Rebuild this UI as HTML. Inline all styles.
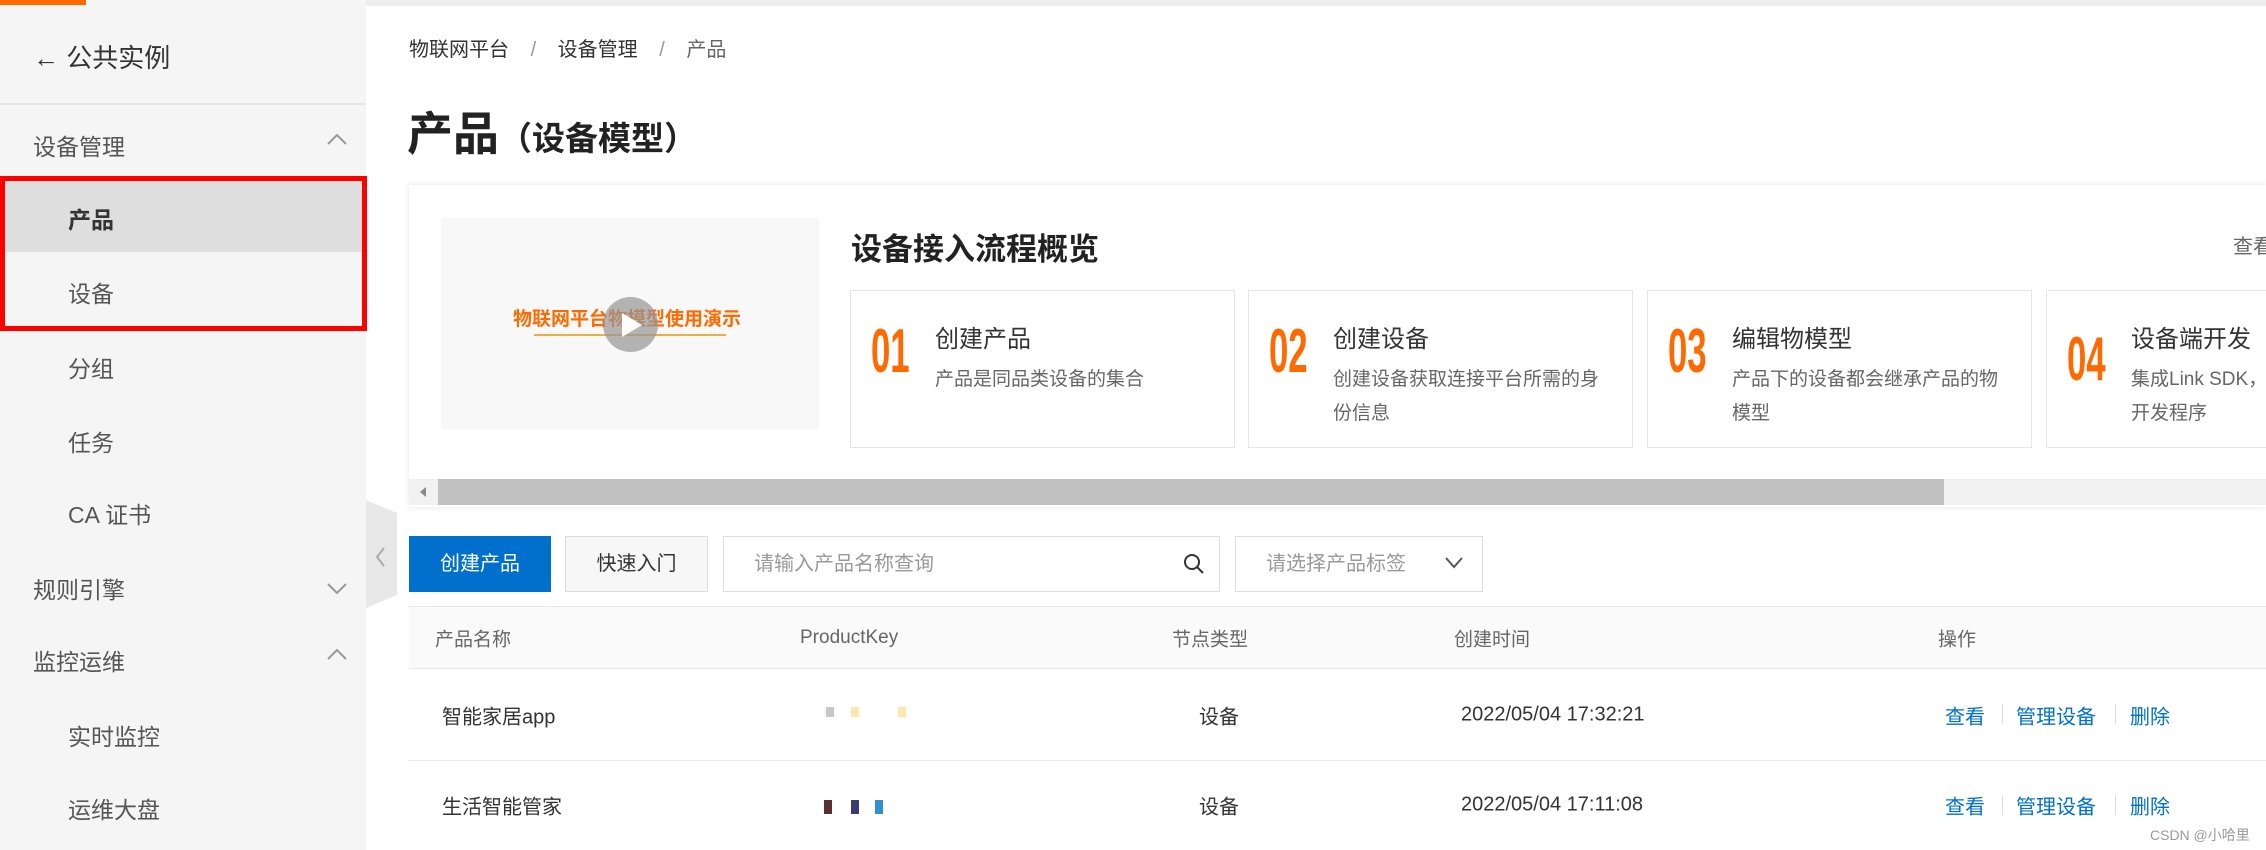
<!DOCTYPE html>
<html><head><meta charset="utf-8"><style>
*{margin:0;padding:0;box-sizing:border-box}
body{width:2266px;height:850px;overflow:hidden;background:#fff;font-family:"Liberation Sans","Noto Sans CJK SC",sans-serif;color:#333;position:relative}
.a{position:absolute;white-space:nowrap}
.sb{position:absolute;left:0;top:0;width:366px;height:850px;background:#f5f5f5}
.mi{position:absolute;font-size:23px;color:#555;transform:translateY(-50%)}
.sub{left:68px}
.top{left:33px}
.num{position:absolute;color:#ff6a00;font-size:62px;font-weight:bold;transform:scaleX(.56);transform-origin:left top;line-height:1}
.step{position:absolute;top:290px;width:385px;height:158px;border:1px solid #e6e6e6;background:#fff}
.st{position:absolute;left:84px;top:28px;font-size:24px;color:#333}
.sd{position:absolute;left:84px;top:72px;font-size:19px;color:#666;line-height:34px;white-space:normal;width:275px}
.th{position:absolute;font-size:19px;color:#666;top:638px;transform:translateY(-50%)}
.td{position:absolute;font-size:20px;color:#333;transform:translateY(-50%)}
.lk{position:absolute;font-size:20px;color:#0070cc;transform:translateY(-50%)}
</style></head><body>
<div class="a" style="left:0;top:0;width:2266px;height:6px;background:#eee"></div>
<div class="sb"></div>
<div class="a" style="left:0;top:0;width:86px;height:5px;background:#ff6a00"></div>
<div class="a" style="left:33px;top:38px;font-size:26px;color:#333"><b>←</b> 公共实例</div>
<div class="a" style="left:0;top:103px;width:366px;height:2px;background:#e4e4e4"></div>
<div class="mi top" style="top:145px">设备管理</div>
<svg class="a" style="left:326px;top:132px" width="22" height="14"><path d="M2 12 L11 3 L20 12" fill="none" stroke="#999" stroke-width="2"/></svg>
<div class="a" style="left:0;top:176px;width:367px;height:155px;border:5px solid #f00;background:#f5f5f5"></div>
<div class="a" style="left:5px;top:181px;width:357px;height:71px;background:#dedede"></div>
<div class="mi sub" style="top:218px;font-weight:bold;color:#333">产品</div>
<div class="mi sub" style="top:292px">设备</div>
<div class="mi sub" style="top:367px">分组</div>
<div class="mi sub" style="top:441px">任务</div>
<div class="mi sub" style="top:513px">CA 证书</div>
<div class="mi top" style="top:588px">规则引擎</div>
<svg class="a" style="left:326px;top:581px" width="22" height="14"><path d="M2 3 L11 12 L20 3" fill="none" stroke="#999" stroke-width="2"/></svg>
<div class="mi top" style="top:660px">监控运维</div>
<svg class="a" style="left:326px;top:647px" width="22" height="14"><path d="M2 12 L11 3 L20 12" fill="none" stroke="#999" stroke-width="2"/></svg>
<div class="mi sub" style="top:735px">实时监控</div>
<div class="mi sub" style="top:808px">运维大盘</div>
<svg class="a" style="left:366px;top:500px" width="32" height="110"><path d="M0 0 L31 13 L31 95 L0 108Z" fill="#e8e8e8"/><path d="M18 48 L11 57 L18 66" fill="none" stroke="#aaa" stroke-width="2"/></svg>

<div class="a" style="left:409px;top:33px;font-size:20px;color:#333">物联网平台 <span style="color:#999;margin:0 16px">/</span> 设备管理 <span style="color:#999;margin:0 16px">/</span> <span style="color:#666">产品</span></div>
<div class="a" style="left:407px;top:98px;font-size:46px;font-weight:bold;color:#222">产品<span style="font-size:33px">（设备模型）</span></div>

<div class="a" style="left:409px;top:185px;width:1857px;height:322px;background:#fff;box-shadow:0 0 6px rgba(0,0,0,.1)"></div>
<div class="a" style="left:441px;top:218px;width:378px;height:211px;background:#f8f8f8"></div>
<div class="a" style="left:513px;top:304px;font-size:19px;font-weight:bold;color:#ff6a00">物联网平台物模型使用演示</div>
<div class="a" style="left:534px;top:334px;width:192px;height:2px;background:#e8b040"></div>
<div class="a" style="left:603px;top:297px;width:55px;height:55px;border-radius:50%;background:rgba(150,150,150,.7)"></div>
<svg class="a" style="left:620px;top:311px" width="24" height="28"><path d="M2 2 L22 14 L2 26Z" fill="#fff"/></svg>
<div class="a" style="left:851px;top:224px;font-size:31px;font-weight:bold;color:#222">设备接入流程概览</div>
<div class="a" style="left:2233px;top:230px;font-size:20px;color:#666">查看</div>

<div class="step" style="left:850px"><div class="num" style="left:20px;top:30px">01</div><div class="st">创建产品</div><div class="sd">产品是同品类设备的集合</div></div>
<div class="step" style="left:1248px"><div class="num" style="left:20px;top:30px">02</div><div class="st">创建设备</div><div class="sd">创建设备获取连接平台所需的身份信息</div></div>
<div class="step" style="left:1647px"><div class="num" style="left:20px;top:30px">03</div><div class="st">编辑物模型</div><div class="sd">产品下的设备都会继承产品的物模型</div></div>
<div class="step" style="left:2046px;width:240px"><div class="num" style="left:20px;top:38px">04</div><div class="st">设备端开发</div><div class="sd" style="width:150px;overflow:hidden">集成Link SDK，开发程序</div></div>

<div class="a" style="left:409px;top:479px;width:1857px;height:26px;background:#f1f1f1"></div>
<div class="a" style="left:438px;top:479px;width:1506px;height:26px;background:#c1c1c1"></div>
<svg class="a" style="left:418px;top:485px" width="10" height="14"><path d="M8 2 L2 7 L8 12Z" fill="#888"/></svg>

<div class="a" style="left:409px;top:536px;width:142px;height:56px;background:#0070cc;color:#fff;font-size:20px;line-height:56px;text-align:center">创建产品</div>
<div class="a" style="left:565px;top:536px;width:143px;height:56px;border:1px solid #ddd;background:#f7f7f7;font-size:20px;line-height:54px;text-align:center;color:#333">快速入门</div>
<div class="a" style="left:723px;top:536px;width:497px;height:56px;border:1px solid #ddd;font-size:20px;line-height:54px;padding-left:30px;color:#999">请输入产品名称查询</div>
<svg class="a" style="left:1183px;top:553px" width="22" height="22"><circle cx="9" cy="9" r="7" fill="none" stroke="#333" stroke-width="2"/><path d="M14 14 L20 20" stroke="#333" stroke-width="2"/></svg>
<div class="a" style="left:1235px;top:536px;width:248px;height:56px;border:1px solid #ddd;font-size:20px;line-height:54px;padding-left:30px;color:#999">请选择产品标签</div>
<svg class="a" style="left:1444px;top:556px" width="20" height="14"><path d="M2 2 L10 11 L18 2" fill="none" stroke="#555" stroke-width="2"/></svg>

<div class="a" style="left:409px;top:606px;width:1857px;height:63px;background:#fafafa;border-top:1px solid #e8e8e8;border-bottom:1px solid #e8e8e8"></div>
<div class="th" style="left:435px">产品名称</div>
<div class="th" style="left:800px">ProductKey</div>
<div class="th" style="left:1172px">节点类型</div>
<div class="th" style="left:1454px">创建时间</div>
<div class="th" style="left:1938px">操作</div>
<div class="a" style="left:409px;top:760px;width:1857px;height:1px;background:#e8e8e8"></div>

<div class="td" style="left:442px;top:715px">智能家居app</div>
<div class="a" style="left:826px;top:707px;width:8px;height:10px;background:#c8c8c8"></div>
<div class="a" style="left:851px;top:707px;width:8px;height:10px;background:#fde6b0"></div>
<div class="a" style="left:898px;top:707px;width:8px;height:10px;background:#fde6b0"></div>
<div class="td" style="left:1199px;top:715px">设备</div>
<div class="td" style="left:1461px;top:715px">2022/05/04 17:32:21</div>
<div class="lk" style="left:1945px;top:715px">查看</div>
<div class="a" style="left:2002px;top:704px;width:1px;height:20px;background:#ddd"></div>
<div class="lk" style="left:2016px;top:715px">管理设备</div>
<div class="a" style="left:2115px;top:704px;width:1px;height:20px;background:#ddd"></div>
<div class="lk" style="left:2130px;top:715px">删除</div>

<div class="td" style="left:442px;top:805px">生活智能管家</div>
<div class="a" style="left:824px;top:800px;width:8px;height:14px;background:#5a3030"></div>
<div class="a" style="left:851px;top:800px;width:8px;height:14px;background:#3a3a70"></div>
<div class="a" style="left:875px;top:800px;width:8px;height:14px;background:#3090d0"></div>
<div class="td" style="left:1199px;top:805px">设备</div>
<div class="td" style="left:1461px;top:805px">2022/05/04 17:11:08</div>
<div class="lk" style="left:1945px;top:805px">查看</div>
<div class="a" style="left:2002px;top:795px;width:1px;height:20px;background:#ddd"></div>
<div class="lk" style="left:2016px;top:805px">管理设备</div>
<div class="a" style="left:2115px;top:795px;width:1px;height:20px;background:#ddd"></div>
<div class="lk" style="left:2130px;top:805px">删除</div>
<div class="a" style="left:2150px;top:825px;font-size:14px;color:#999">CSDN @小哈里</div>
</body></html>
